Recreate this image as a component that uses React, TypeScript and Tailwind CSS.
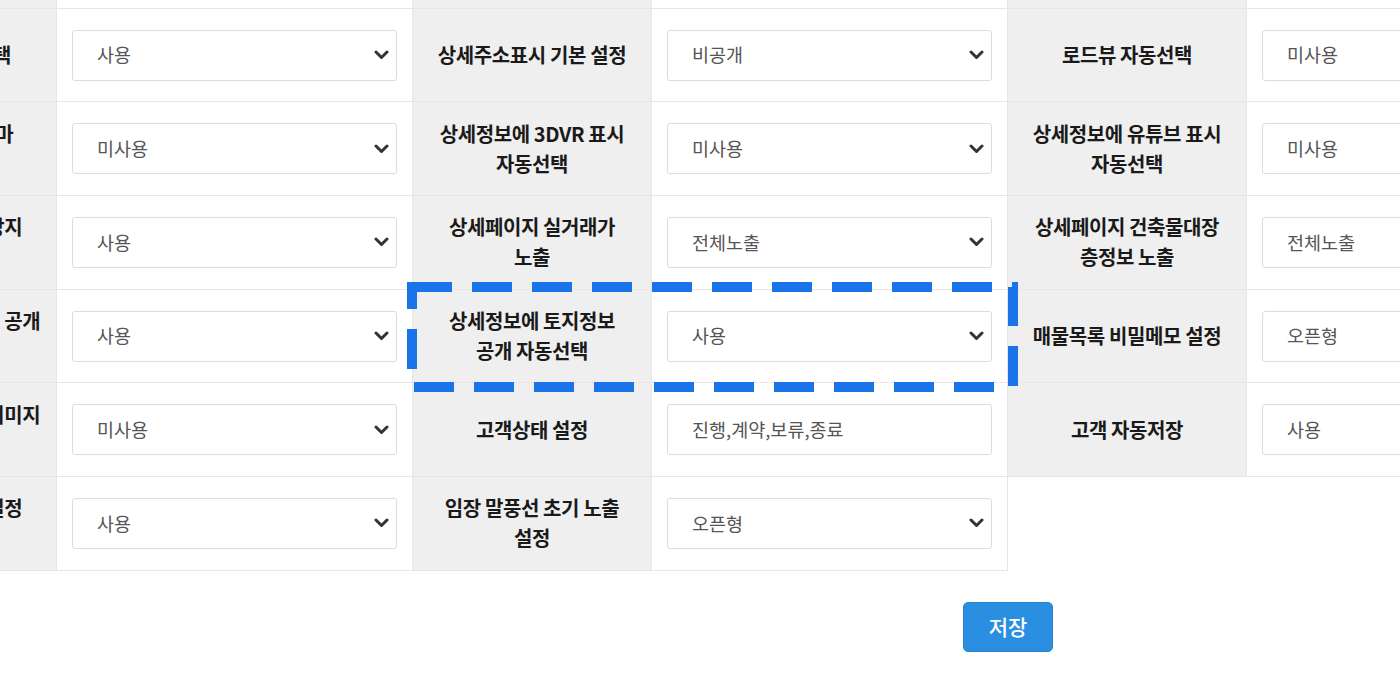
import React from 'react';

type Cell = { label: string[]; value: string; input?: boolean };

const rows: Cell[][] = [
  [
    { label: ['매물지도 자동선택'], value: '사용' },
    { label: ['상세주소표시 기본 설정'], value: '비공개' },
    { label: ['로드뷰 자동선택'], value: '미사용' },
  ],
  [
    { label: ['상세정보 지도 테마', '자동선택'], value: '미사용' },
    { label: ['상세정보에 3DVR 표시', '자동선택'], value: '미사용' },
    { label: ['상세정보에 유튜브 표시', '자동선택'], value: '미사용' },
  ],
  [
    { label: ['매물의 중복등록 방지', '설정'], value: '사용' },
    { label: ['상세페이지 실거래가', '노출'], value: '전체노출' },
    { label: ['상세페이지 건축물대장', '층정보 노출'], value: '전체노출' },
  ],
  [
    { label: ['상세정보에 매물번호 공개', '자동선택'], value: '사용' },
    { label: ['상세정보에 토지정보', '공개 자동선택'], value: '사용' },
    { label: ['매물목록 비밀메모 설정'], value: '오픈형' },
  ],
  [
    { label: ['매물상세 워터마크 이미지', '설정'], value: '미사용' },
    { label: ['고객상태 설정'], value: '진행,계약,보류,종료', input: true },
    { label: ['고객 자동저장'], value: '사용' },
  ],
  [
    { label: ['매물 상세페이지 일정', '노출'], value: '사용' },
    { label: ['임장 말풍선 초기 노출', '설정'], value: '오픈형' },
  ],
];

function Chevron() {
  return (
    <svg width="15" height="10" viewBox="0 0 15 10" className="shrink-0">
      <path d="M2 2 L7.5 7.5 L13 2" fill="none" stroke="#333" strokeWidth="3" strokeLinecap="round" strokeLinejoin="round" />
    </svg>
  );
}

function Field({ value, input }: { value: string; input?: boolean }) {
  return (
    <div className="h-[51px] w-full border border-[#dcdcdc] rounded-[3px] bg-white flex items-center justify-between pl-6 pr-[7px] text-[18.5px] text-[#555]">
      <span>{value}</span>
      {!input && <Chevron />}
    </div>
  );
}

export default function App() {
  return (
    <div className="w-[1400px] h-[700px] overflow-hidden bg-white font-['Noto_Sans_CJK_KR','Noto_Sans',sans-serif]">
      <div className="relative ml-[-182px] mt-[-85px] w-[1785px]">
        {/* row above, scrolled out of view */}
        <div className="grid grid-cols-[239px_356px_239px_356px_239px_356px] h-[93.7px]">
          {[0, 1, 2].map((j) => (
            <React.Fragment key={j}>
              <div className="bg-[#efefef] border-b border-r border-[#e6e6e6]" />
              <div className="bg-white border-b border-r border-[#e6e6e6]" />
            </React.Fragment>
          ))}
        </div>

        {rows.map((row, i) => (
          <div key={i} className="grid grid-cols-[239px_356px_239px_356px_239px_356px] h-[93.7px]">
            {row.map((c, j) => (
              <React.Fragment key={j}>
                <div className="bg-[#efefef] border-b border-r border-[#e6e6e6] flex flex-col items-center justify-center text-center text-[20px] font-bold leading-[30px] text-[#1a1a1a] tracking-[-0.4px]">
                  {c.label.map((l, k) => (
                    <span key={k} className="whitespace-nowrap">{l}</span>
                  ))}
                </div>
                <div className="bg-white border-b border-r border-[#e6e6e6] flex items-center px-[15px]">
                  <Field value={c.value} input={c.input} />
                </div>
              </React.Fragment>
            ))}
          </div>
        ))}

        {/* highlight box */}
        <svg className="absolute left-[589px] top-[367px] pointer-events-none" width="612" height="111" viewBox="0 0 612 111">
          <rect x="5" y="5" width="601" height="100" fill="none" stroke="#1a73e8" strokeWidth="10" strokeDasharray="40 20" />
        </svg>

        <div className="flex pl-[1145px] pt-[31px]">
          <button className="w-[90px] h-[50px] rounded-[5px] bg-[#2a8fe0] border border-[#2683cf] text-white text-[21px] font-medium">
            저장
          </button>
        </div>
      </div>
    </div>
  );
}
